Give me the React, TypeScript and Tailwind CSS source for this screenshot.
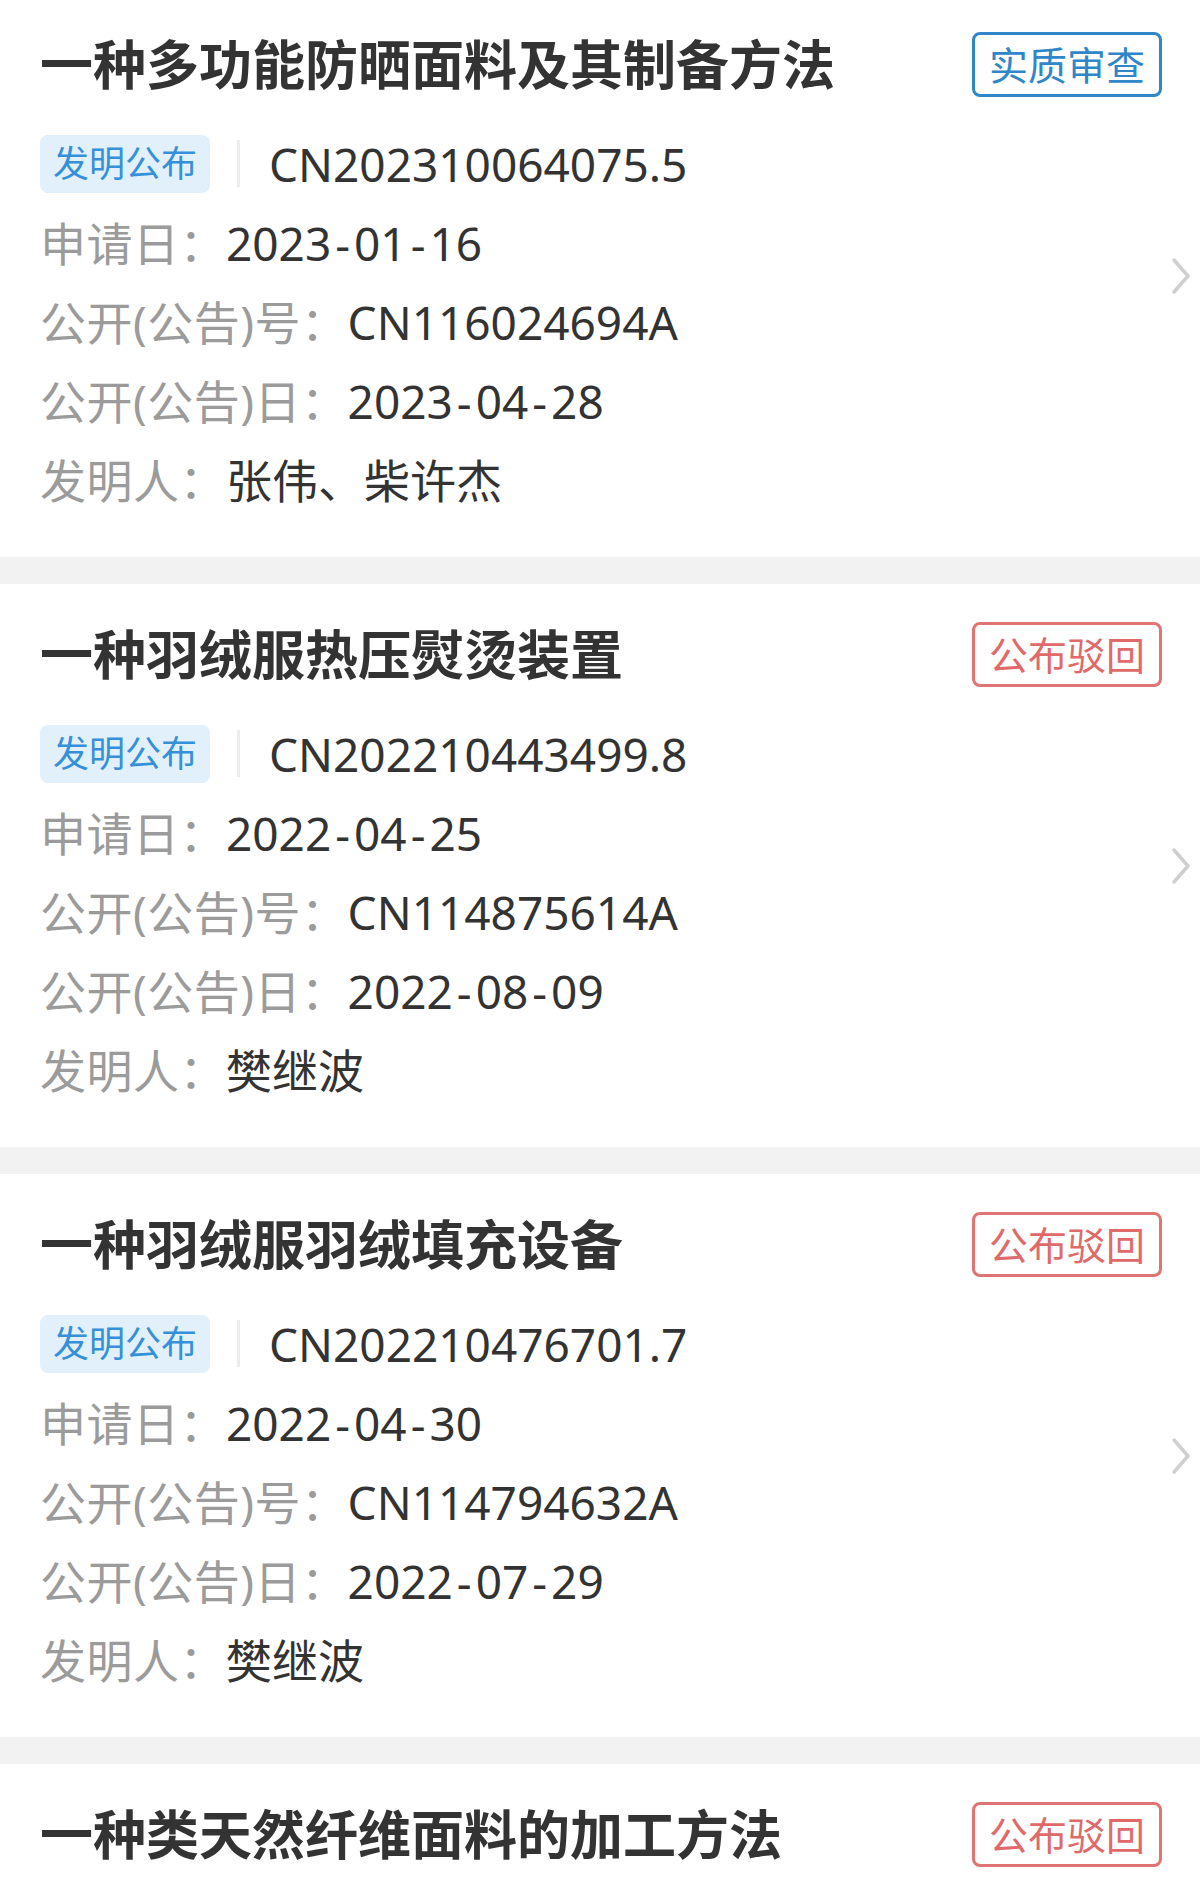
import React from 'react';

type Tone = 'blue' | 'red';

interface Patent {
  title: string;
  status: string;
  tone: Tone;
  appNo?: string;
  applyDate?: string;
  pubNo?: string;
  pubDate?: string;
  inventors?: string;
}

const patents: Patent[] = [
  {
    title: '一种多功能防晒面料及其制备方法',
    status: '实质审查',
    tone: 'blue',
    appNo: 'CN202310064075.5',
    applyDate: '2023-01-16',
    pubNo: 'CN116024694A',
    pubDate: '2023-04-28',
    inventors: '张伟、柴许杰',
  },
  {
    title: '一种羽绒服热压熨烫装置',
    status: '公布驳回',
    tone: 'red',
    appNo: 'CN202210443499.8',
    applyDate: '2022-04-25',
    pubNo: 'CN114875614A',
    pubDate: '2022-08-09',
    inventors: '樊继波',
  },
  {
    title: '一种羽绒服羽绒填充设备',
    status: '公布驳回',
    tone: 'red',
    appNo: 'CN202210476701.7',
    applyDate: '2022-04-30',
    pubNo: 'CN114794632A',
    pubDate: '2022-07-29',
    inventors: '樊继波',
  },
  {
    title: '一种类天然纤维面料的加工方法',
    status: '公布驳回',
    tone: 'red',
  },
];

const font = { fontFamily: '"Noto Sans", "Noto Sans CJK SC", sans-serif' };

const DateText: React.FC<{ value: string }> = ({ value }) => {
  const parts = value.split('-');
  return (
    <>
      {parts.map((part, i) => (
        <React.Fragment key={i}>
          {i > 0 && <span className="mx-[4px]">-</span>}
          {part}
        </React.Fragment>
      ))}
    </>
  );
};

const Row: React.FC<{ label: string; children: React.ReactNode }> = ({ label, children }) => (
  <div className="h-[79px] flex items-center text-[46px] leading-none whitespace-nowrap">
    <span className="text-[#9b9b9b] tracking-[0.5px]">{label}</span>
    <span className="text-[#333333]">{children}</span>
  </div>
);

const PatentCard: React.FC<{ patent: Patent }> = ({ patent }) => {
  const boxTone =
    patent.tone === 'blue'
      ? 'border-[#2f86c9] text-[#2f86c9]'
      : 'border-[#e07474] text-[#e06a6a]';

  return (
    <div className="bg-white min-h-[563px] flex">
      <div className="flex-1 self-start pl-[40px] pt-[38px] pb-[38px]">
        <div className="h-[65px] flex items-center justify-between">
          <h2 className="text-[53px] font-bold leading-none text-[#333333] whitespace-nowrap">{patent.title}</h2>
          <div
            className={`w-[190px] h-[65px] shrink-0 border-[3px] rounded-[8px] flex items-center justify-center text-[39px] leading-none ${boxTone}`}
          >
            {patent.status}
          </div>
        </div>

        {patent.appNo && (
          <>
            <div className="h-[79px] mt-[27px] flex items-center">
              <span className="h-[58px] px-[13px] rounded-[8px] bg-[#e2f0fc] text-[#3690d9] text-[36px] leading-none flex items-center">
                发明公布
              </span>
              <span className="ml-[27px] w-[3px] h-[47px] bg-[#ececec]" />
              <span className="ml-[29px] text-[46px] leading-none text-[#333333]">{patent.appNo}</span>
            </div>
            <Row label="申请日：">
              <DateText value={patent.applyDate ?? ''} />
            </Row>
            <Row label="公开(公告)号：">{patent.pubNo}</Row>
            <Row label="公开(公告)日：">
              <DateText value={patent.pubDate ?? ''} />
            </Row>
            <Row label="发明人：">{patent.inventors}</Row>
          </>
        )}
      </div>
      <div className="w-[38px] shrink-0 self-center flex justify-center">
        <svg width="22" height="40" viewBox="0 0 22 40" fill="none">
          <path d="M4 4 L18 20 L4 36" stroke="#cfcfcf" strokeWidth="3.5" strokeLinecap="round" strokeLinejoin="round" />
        </svg>
      </div>
    </div>
  );
};

export default function App() {
  return (
    <div className="w-[1200px] h-[1881px] overflow-hidden bg-white" style={font}>
      <div className="-mt-[6px] flex flex-col">
        {patents.map((p, i) => (
          <React.Fragment key={p.title}>
            {i > 0 && <div className="h-[27px] bg-[#f2f2f2]" />}
            <PatentCard patent={p} />
          </React.Fragment>
        ))}
      </div>
    </div>
  );
}
